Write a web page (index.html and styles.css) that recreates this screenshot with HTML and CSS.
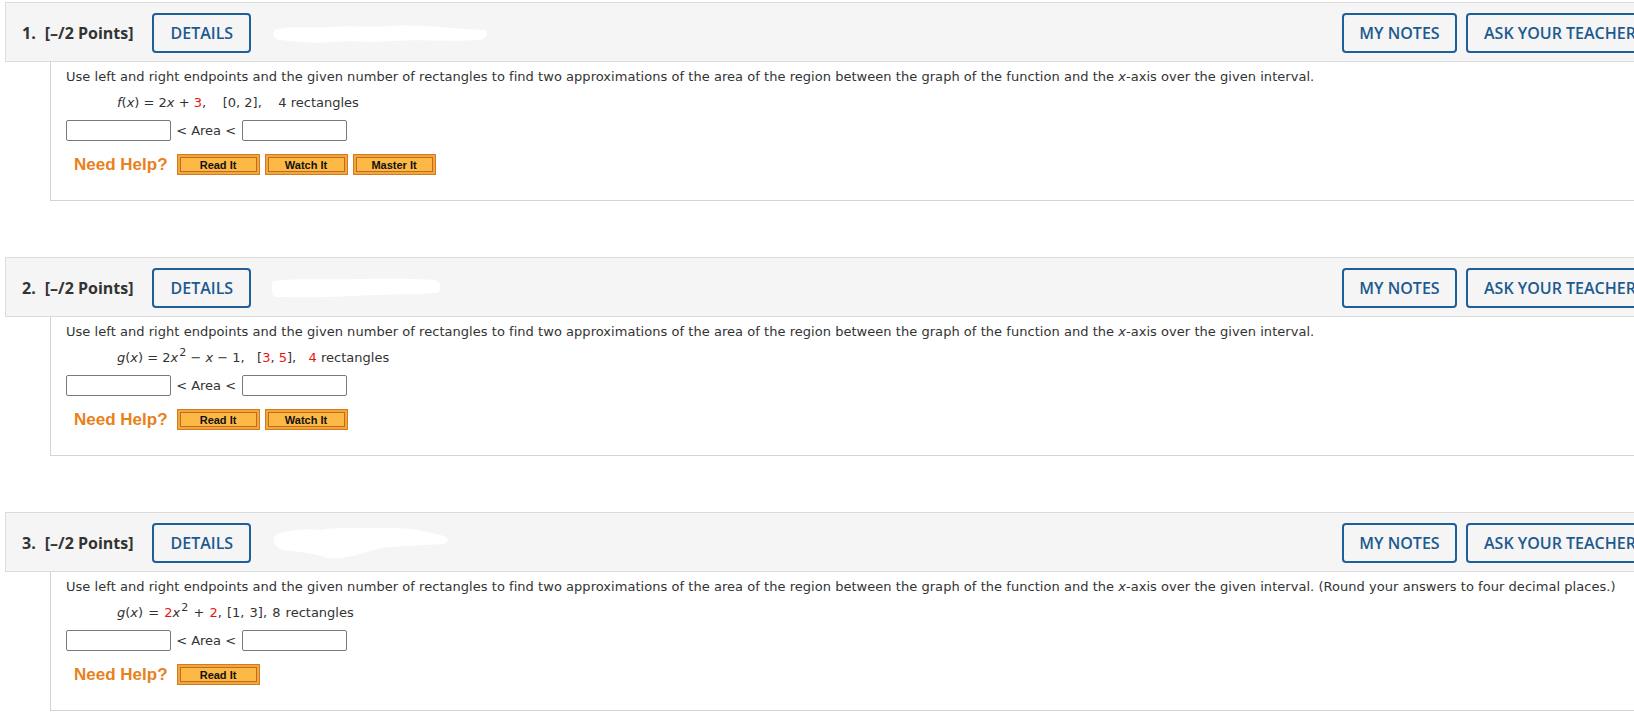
FILE: index.html
```html
<!DOCTYPE html>
<html lang="en">
<head>
<meta charset="utf-8">
<title>Questions</title>
<link rel="stylesheet" href="styles.css">
</head>
<body>
<div class="page">

  <section class="question">
    <div class="q-header">
      <div class="q-left">
        <span class="q-num">1.</span>
        <span class="q-points">[–/2 Points]</span>
        <span class="btn-outline btn-details">DETAILS</span>
        <svg class="redact" width="220" height="24" viewBox="0 0 220 24"><path d="M4 9 C20 4 40 8 60 6 C80 4 100 7 120 5 C150 3 180 8 214 9 C218 12 216 18 208 19 C180 21 150 18 120 20 C100 22 80 19 60 21 C40 23 20 20 8 19 C2 17 1 12 4 9 Z" fill="#fff"/></svg>
      </div>
      <div class="q-right">
        <span class="btn-outline btn-notes">MY NOTES</span>
        <span class="btn-outline btn-ask">ASK YOUR TEACHER</span>
      </div>
    </div>
    <div class="q-body">
      <p class="q-text">Use left and right endpoints and the given number of rectangles to find two approximations of the area of the region between the graph of the function and the <i>x</i>-axis over the given interval.</p>
      <p class="q-func"><i>f</i>(<i>x</i>) = 2<i>x</i> + <span class="red">3</span>,&nbsp;&nbsp;&nbsp; [0, 2],&nbsp;&nbsp;&nbsp; 4 rectangles</p>
      <div class="q-answer"><input class="ans" type="text"><span class="area"> &lt; Area &lt; </span><input class="ans" type="text"></div>
      <div class="q-help">
        <span class="help-label">Need Help?</span>
        <span class="help-btn">Read It</span>
        <span class="help-btn">Watch It</span>
        <span class="help-btn">Master It</span>
      </div>
    </div>
  </section>

  <section class="question">
    <div class="q-header">
      <div class="q-left">
        <span class="q-num">2.</span>
        <span class="q-points">[–/2 Points]</span>
        <span class="btn-outline btn-details">DETAILS</span>
        <svg class="redact" width="175" height="26" viewBox="0 0 175 26"><path d="M2 6 C30 3 60 5 90 4 C120 3 150 4 164 5 C170 8 172 14 166 18 C140 20 110 19 80 21 C50 23 25 22 4 22 C0 18 0 10 2 6 Z" fill="#fff"/></svg>
      </div>
      <div class="q-right">
        <span class="btn-outline btn-notes">MY NOTES</span>
        <span class="btn-outline btn-ask">ASK YOUR TEACHER</span>
      </div>
    </div>
    <div class="q-body">
      <p class="q-text">Use left and right endpoints and the given number of rectangles to find two approximations of the area of the region between the graph of the function and the <i>x</i>-axis over the given interval.</p>
      <p class="q-func"><i>g</i>(<i>x</i>) = 2<i>x</i><sup>2</sup> − <i>x</i> − 1,&nbsp;&nbsp; [<span class="red">3</span>, <span class="red">5</span>],&nbsp;&nbsp; <span class="red">4</span> rectangles</p>
      <div class="q-answer"><input class="ans" type="text"><span class="area"> &lt; Area &lt; </span><input class="ans" type="text"></div>
      <div class="q-help">
        <span class="help-label">Need Help?</span>
        <span class="help-btn">Read It</span>
        <span class="help-btn">Watch It</span>
      </div>
    </div>
  </section>

  <section class="question">
    <div class="q-header">
      <div class="q-left">
        <span class="q-num">3.</span>
        <span class="q-points">[–/2 Points]</span>
        <span class="btn-outline btn-details">DETAILS</span>
        <svg class="redact" width="182" height="38" viewBox="0 0 182 38"><path d="M6 10 C20 6 36 4 50 6 C70 2 90 5 110 4 C130 3 150 6 166 10 C178 12 180 18 172 20 C150 22 130 21 110 24 C90 30 70 36 56 34 C46 30 30 28 12 26 C2 22 0 14 6 10 Z" fill="#fff"/></svg>
      </div>
      <div class="q-right">
        <span class="btn-outline btn-notes">MY NOTES</span>
        <span class="btn-outline btn-ask">ASK YOUR TEACHER</span>
      </div>
    </div>
    <div class="q-body">
      <p class="q-text">Use left and right endpoints and the given number of rectangles to find two approximations of the area of the region between the graph of the function and the <i>x</i>-axis over the given interval. (Round your answers to four decimal places.)</p>
      <p class="q-func q-func-tight"><i>g</i>(<i>x</i>) = <span class="red">2</span><i>x</i><sup>2</sup> + <span class="red">2</span>, [1, 3], 8 rectangles</p>
      <div class="q-answer"><input class="ans" type="text"><span class="area"> &lt; Area &lt; </span><input class="ans" type="text"></div>
      <div class="q-help">
        <span class="help-label">Need Help?</span>
        <span class="help-btn">Read It</span>
      </div>
    </div>
  </section>

</div>
</body>
</html>
```

FILE: styles.css
```css
html, body {
  margin: 0;
  padding: 0;
  overflow: hidden;
  background: #fff;
}

.page {
  padding: 2px 0 0 5px;
  width: 1700px;
}

.question {
  width: 1671px;
  margin-bottom: 56px;
}

.q-header {
  box-sizing: border-box;
  height: 60px;
  display: flex;
  align-items: flex-start;
  justify-content: space-between;
  background: #f5f5f5;
  border: 1px solid #dcdcdc;
  padding: 10px 10px 8px 16px;
  font-family: "Open Sans", "Noto Sans", sans-serif;
  font-size: 16px;
  font-weight: 600;
  color: #333;
}

.q-left,
.q-right {
  display: flex;
  align-items: center;
  height: 40px;
}

.q-num {
  font-weight: 700;
  margin-right: 9px;
}

.q-points {
  font-weight: 700;
  margin-right: 19px;
}

.btn-outline {
  box-sizing: border-box;
  height: 40px;
  display: inline-flex;
  align-items: center;
  justify-content: center;
  border: 2px solid #1f5f99;
  border-radius: 4px;
  color: #1c5a90;
  font-weight: 600;
  white-space: nowrap;
}

.btn-details {
  padding: 0 16px;
}

.redact {
  margin-left: 20px;
  display: block;
}

.btn-notes {
  width: 115px;
  margin-right: 9px;
}

.btn-ask {
  width: 199px;
  justify-content: flex-start;
  padding: 0 0 0 16px;
}

.q-body {
  margin-left: 45px;
  border-left: 1px solid #d3d3d3;
  border-bottom: 1px solid #d3d3d3;
  padding: 6px 15px 25px;
  font-family: "DejaVu Sans", Verdana, sans-serif;
  font-size: 13px;
  color: #333;
}

.q-text {
  margin: 0 0 8px;
  line-height: 18px;
  white-space: nowrap;
  letter-spacing: 0.04px;
}

.q-func {
  margin: 0 0 8px 51px;
  line-height: 18px;
}

.q-func-tight {
  word-spacing: 1px;
}

.q-func sup {
  font-size: 11px;
  line-height: 0;
  vertical-align: 6px;
  margin-left: 1px;
}

.red {
  color: #ee1111;
}

.q-answer {
  height: 21px;
  display: flex;
  align-items: center;
  white-space: pre;
  margin-bottom: 13px;
}

.area {
  padding: 0 2px 0 1px;
}

.ans {
  box-sizing: border-box;
  width: 105px;
  height: 21px;
  margin: 0;
  padding: 0 3px;
  border: 1px solid #7a7a7a;
  border-radius: 2px;
  background: #fff;
  font-family: "DejaVu Sans", sans-serif;
  font-size: 13px;
}

.q-help {
  display: flex;
  align-items: center;
  gap: 5px;
  height: 21px;
  padding-left: 8px;
}

.help-label {
  font-family: "Liberation Sans", Arial, sans-serif;
  font-weight: bold;
  font-size: 17px;
  color: #e8811b;
  margin-right: 4px;
}

.help-btn {
  box-sizing: border-box;
  width: 83px;
  height: 21px;
  display: inline-flex;
  align-items: center;
  justify-content: center;
  border: 1px solid #cf7d24;
  background: #fdb946;
  box-shadow: inset 0 0 0 2px #f6a53d, inset 0 0 0 3px #bf6e1e;
  font-family: "Liberation Sans", Arial, sans-serif;
  font-weight: bold;
  font-size: 11px;
  color: #111;
}
```
